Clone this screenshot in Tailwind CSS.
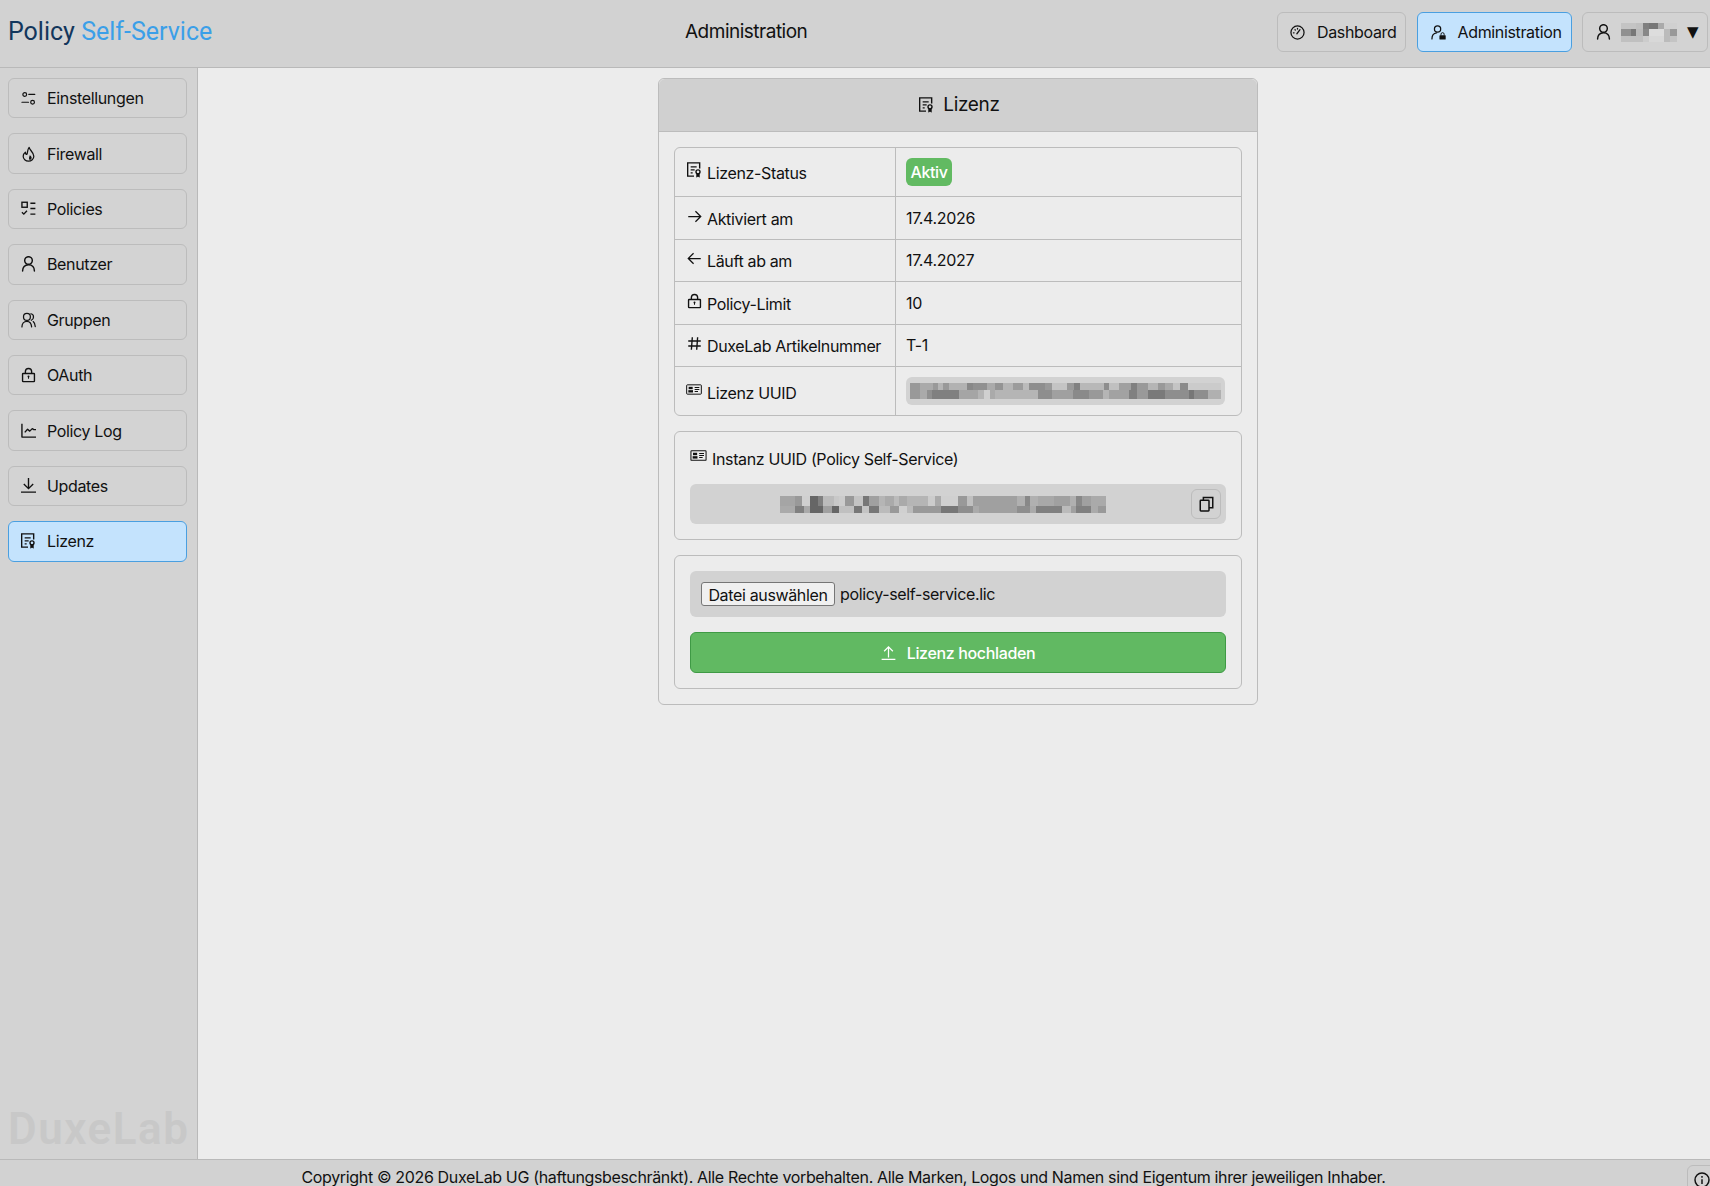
<!DOCTYPE html>
<html lang="de">
<head>
  <meta charset="UTF-8" />
  <meta name="viewport" content="width=device-width, initial-scale=1.0"/>
  <title>Policy Self-Service</title>
  <script src="https://cdn.jsdelivr.net/npm/@tailwindcss/browser@4"></script>
</head>
<body class="h-[1186px] overflow-hidden flex flex-col bg-[#ececec] text-[16px] tracking-[-0.35px] text-[#111] font-['Inter','Liberation_Sans',sans-serif]">

  <!-- icon sprites -->
  <svg class="hidden">
    <symbol id="i-license" viewBox="2 1 22.500 23.500" fill="none" stroke="currentColor" stroke-width="2.100">
      <path d="M21 10.500V2H3v20h9.500M7.500 8h9M7.500 12.500h6M7.500 17h3"/>
      <circle cx="18.500" cy="15.500" r="3"/>
      <path d="M16.500 18v5.500l2-1.500 2 1.500V18" fill="currentColor" stroke-width="1"/>
    </symbol>
    <symbol id="i-user" viewBox="1.500 1.500 21 23" fill="none" stroke="currentColor" stroke-width="2.100" stroke-linecap="round">
      <circle cx="12" cy="8" r="5.500"/>
      <path d="M3.500 23c0-5 3-9 8.500-9s8.500 4 8.500 9"/>
    </symbol>
    <symbol id="i-lock" viewBox="0 0 24 24" fill="none" stroke="currentColor" stroke-width="2.200">
      <rect x="2.500" y="9.500" width="19" height="13" rx="1"/>
      <path d="M7 9.500V6.500a5 5 0 0 1 10 0v3"/>
      <circle cx="12" cy="14.500" r="1.600" fill="currentColor" stroke="none"/>
      <path d="M12 15v3" stroke-width="1.600"/>
    </symbol>
    <symbol id="i-card" viewBox="0 0 24 16" fill="none" stroke="currentColor" stroke-width="1.500">
      <rect x="1" y="1" width="22" height="14" rx="1"/>
      <rect x="4" y="4" width="6" height="3.500" fill="currentColor" stroke="none"/>
      <rect x="3.500" y="9" width="7" height="3.500" fill="currentColor" stroke="none"/>
      <path d="M13 5h7M13 8h7M13 11h5"/>
    </symbol>
  </svg>

  <!-- Header -->
  <header class="h-[68px] shrink-0 flex items-center pb-[3px] bg-[#d2d2d2] border-b border-[#b9b9b9]">
    <div class="w-[685px] shrink-0 pl-[8px] mb-[1px] text-[25px] leading-none font-['Roboto',sans-serif] tracking-[0px] text-[#12365c]">Policy <span class="text-[#3b9fe8]">Self-Service</span></div>
    <div class="text-[19px] tracking-[-0.5px]">Administration</div>
    <nav class="ml-auto flex gap-[10.500px] pr-[2px]">
      <a class="h-[40px] w-[129px] flex items-center gap-[12px] pl-[12px] rounded-md border border-[#bcbcbc] bg-[#d3d3d3]">
        <svg class="w-[15px] h-[15px]" viewBox="0 0 24 24" fill="none" stroke="currentColor" stroke-width="2" stroke-linecap="round">
          <circle cx="12" cy="12" r="10.500"/>
          <path d="M11 14l5-6.500M5.500 12.500h1M8 7.500l.5.5M12 5.500v1"/>
        </svg>
        Dashboard
      </a>
      <a class="h-[40px] w-[155px] flex items-center gap-[12px] pl-[13px] rounded-md border border-[#4a9fe0] bg-[#c4e3fd]">
        <svg class="w-[15px] h-[16px]" viewBox="0 0 24 24" fill="none" stroke="currentColor" stroke-width="2" stroke-linecap="round">
          <circle cx="10.500" cy="7" r="5"/>
          <path d="M1.500 23c0-5.500 3-9 7.500-9.500"/>
          <rect x="13.500" y="17" width="10" height="7" rx="1" fill="currentColor" stroke="none"/>
          <path d="M16 17v-1.500a2.500 2.500 0 0 1 5 0V17" stroke-width="1.500"/>
        </svg>
        Administration
      </a>
      <a class="h-[40px] w-[126px] flex items-center pl-[13px] rounded-md border border-[#bcbcbc] bg-[#d3d3d3]">
        <svg class="w-[15px] h-[16px]"><use href="#i-user"/></svg>
        <svg class="ml-[10px] w-[56px] h-[19px]" data-blur="90 27 168 57" data-cells="45|135:#c4c4c4,156:#c0c0c0,174:#808080,201:#777,219:#aaa,258:#d0d0d0;66|120:#909090,135:#777,156:#bbb,174:#888,219:#ddd,237:#bbb,258:#999;84|156:#c0c0c0,174:#ccc,219:#d8d8d8,237:#bbb,258:#c4c4c4"></svg>
        <span class="ml-[10px] text-[15px] leading-none font-['DejaVu_Sans',sans-serif]">▼</span>
      </a>
    </nav>
  </header>

  <div class="flex-1 min-h-0 flex">
    <!-- Sidebar -->
    <aside class="w-[198px] shrink-0 flex flex-col gap-[15px] px-[8px] pt-[10px] pb-[8px] bg-[#d3d3d3] border-r border-[#b9b9b9]">
      <a class="h-[40.400px] w-[179px] flex items-center gap-[11px] pl-[12px] rounded-md border border-[#bcbcbc]">
        <svg class="w-[15px] h-[15px]" viewBox="0 0 24 24" fill="none" stroke="currentColor" stroke-width="1.900" stroke-linecap="round">
          <circle cx="6" cy="5.500" r="3"/><path d="M12.500 5.500H22M1.500 18H12"/><circle cx="18.500" cy="18" r="3"/>
        </svg>
        Einstellungen
      </a>
      <a class="h-[40.400px] w-[179px] flex items-center gap-[11px] pl-[12px] rounded-md border border-[#bcbcbc]">
        <svg class="w-[15px] h-[16px]" viewBox="0 0 24 24" fill="none" stroke="currentColor" stroke-width="2" stroke-linejoin="round">
          <path d="M13 1.500c.5 4 7.500 8 7.500 14a8.500 8 0 0 1-17 0c0-3 1.500-5 3.500-6.500 0 2 .7 3.500 2.500 3.500C11 9 10 5 13 1.500z"/>
          <path d="M14 14c2 1 3 2.500 3 4 0 1.500-1 3-2.500 3.500C13 21 12.500 19 13 17c.3-1 .8-2 1-3z" fill="currentColor" stroke="none"/>
        </svg>
        Firewall
      </a>
      <a class="h-[40.400px] w-[179px] flex items-center gap-[11px] pl-[12px] rounded-md border border-[#bcbcbc]">
        <svg class="w-[15px] h-[15px]" viewBox="0 0 24 24" fill="none" stroke="currentColor" stroke-width="2.200">
          <rect x="1.500" y="2" width="8.500" height="8"/><path d="M15 3.500h8M15 12h8M15 21h8M1.500 18l3 3 5-5.500"/>
        </svg>
        Policies
      </a>
      <a class="h-[40.400px] w-[179px] flex items-center gap-[11px] pl-[12px] rounded-md border border-[#bcbcbc]">
        <svg class="w-[15px] h-[16px]"><use href="#i-user"/></svg>
        Benutzer
      </a>
      <a class="h-[40.400px] w-[179px] flex items-center gap-[11px] pl-[12px] rounded-md border border-[#bcbcbc]">
        <svg class="w-[15px] h-[16px]" viewBox="0 0 24 24" fill="none" stroke="currentColor" stroke-width="2" stroke-linecap="round">
          <circle cx="9.500" cy="7" r="5.500"/><path d="M1.500 23c0-5 3-9 8-9s7 3.500 7.500 9M16 2c2.500.5 4 2.500 4 5s-1.500 4.500-3.500 5.500M19.500 14.500c2 1.500 3 4.500 3.300 8"/>
        </svg>
        Gruppen
      </a>
      <a class="h-[40.400px] w-[179px] flex items-center gap-[11px] pl-[12px] rounded-md border border-[#bcbcbc]">
        <svg class="w-[15px] h-[16px]"><use href="#i-lock"/></svg>
        OAuth
      </a>
      <a class="h-[40.400px] w-[179px] flex items-center gap-[11px] pl-[12px] rounded-md border border-[#bcbcbc]">
        <svg class="w-[15px] h-[15px]" viewBox="0 0 24 24" fill="none" stroke="currentColor" stroke-width="2.200">
          <path d="M1.500 1v21.500H24M6 15l4.500-5 3.500 3 4-4 2.500 1.500H24" stroke-linejoin="round"/>
        </svg>
        Policy Log
      </a>
      <a class="h-[40.400px] w-[179px] flex items-center gap-[11px] pl-[12px] rounded-md border border-[#bcbcbc]">
        <svg class="w-[15px] h-[15px]" viewBox="0 0 24 24" fill="none" stroke="currentColor" stroke-width="2.200">
          <path d="M12 0v17M4.500 9.500l7.500 7.500 7.500-7.500M0 22.500h24"/>
        </svg>
        Updates
      </a>
      <a class="h-[40.400px] w-[179px] flex items-center gap-[11px] pl-[12px] rounded-md border border-[#4a9fe0] bg-[#c4e3fd]">
        <svg class="w-[15px] h-[16px]"><use href="#i-license"/></svg>
        Lizenz
      </a>
      <div class="mt-auto text-[44px] leading-[44px] font-semibold font-['Roboto',sans-serif] tracking-[1.500px] text-[#c8c8c8] whitespace-nowrap">DuxeLab</div>
    </aside>

    <!-- Main -->
    <main class="flex-1 flex justify-center pl-[8px] pt-[10px]">
      <section class="w-[600px] h-[627px] rounded-md border border-[#bcbcbc]">
        <h1 class="h-[52.500px] flex items-center justify-center gap-[9px] pt-[1px] pl-[3px] bg-[#d0d0d0] border-b border-[#bcbcbc] rounded-t-md text-[19px]">
          <svg class="w-[15px] h-[16px]"><use href="#i-license"/></svg>
          Lizenz
        </h1>
        <div class="flex flex-col gap-[15.500px] px-[15px] pt-[15px]">

          <!-- Info table -->
          <div class="h-[269px] rounded-md border border-[#bcbcbc]">
            <div class="h-[49.500px] flex border-b border-[#bcbcbc]">
              <div class="w-[221px] flex items-center gap-[5px] pl-[12px] border-r border-[#bcbcbc]">
                <svg class="w-[15px] h-[16px] mb-[3px]"><use href="#i-license"/></svg>
                <span class="mt-[3px]">Lizenz-Status</span>
              </div>
              <div class="flex-1 flex items-center pl-[10px]">
                <span class="h-[28px] w-[46px] flex items-center justify-center rounded-md bg-[#62ba62] text-white font-medium">Aktiv</span>
              </div>
            </div>
            <div class="h-[42.500px] flex border-b border-[#bcbcbc]">
              <div class="w-[221px] flex items-center gap-[5px] pl-[12px] border-r border-[#bcbcbc]">
                <svg class="w-[15px] h-[15px] mb-[3px]" viewBox="0 0 24 24" fill="none" stroke="currentColor" stroke-width="2"><path d="M2 12h20M13.500 3.500l8.500 8.500-8.500 8.500"/></svg>
                <span class="mt-[2px]">Aktiviert am</span>
              </div>
              <div class="flex-1 flex items-center pl-[10px]">17.4.2026</div>
            </div>
            <div class="h-[42.500px] flex border-b border-[#bcbcbc]">
              <div class="w-[221px] flex items-center gap-[5px] pl-[12px] border-r border-[#bcbcbc]">
                <svg class="w-[15px] h-[15px] mb-[3px]" viewBox="0 0 24 24" fill="none" stroke="currentColor" stroke-width="2"><path d="M22 12H2M10.500 3.500L2 12l8.500 8.500"/></svg>
                <span class="mt-[2px]">Läuft ab am</span>
              </div>
              <div class="flex-1 flex items-center pl-[10px]">17.4.2027</div>
            </div>
            <div class="h-[42.500px] flex border-b border-[#bcbcbc]">
              <div class="w-[221px] flex items-center gap-[5px] pl-[12px] border-r border-[#bcbcbc]">
                <svg class="w-[15px] h-[16px] mb-[3px]"><use href="#i-lock"/></svg>
                <span class="mt-[2px]">Policy-Limit</span>
              </div>
              <div class="flex-1 flex items-center pl-[10px]">10</div>
            </div>
            <div class="h-[42.500px] flex border-b border-[#bcbcbc]">
              <div class="w-[221px] flex items-center gap-[5px] pl-[12px] border-r border-[#bcbcbc]">
                <svg class="w-[15px] h-[15px] mb-[3px]" viewBox="0 0 24 24" fill="none" stroke="currentColor" stroke-width="2.200"><path d="M8.500 2L7 22M17 2l-1.500 20M2 8h20M2 16h20"/></svg>
                <span class="mt-[2px]">DuxeLab Artikelnummer</span>
              </div>
              <div class="flex-1 flex items-center pl-[10px]">T-1</div>
            </div>
            <div class="h-[48px] flex">
              <div class="w-[221px] flex items-center gap-[5px] pl-[11px] border-r border-[#bcbcbc]">
                <svg class="w-[16px] h-[11px] mb-[3px]"><use href="#i-card"/></svg>
                <span class="mt-[3px]">Lizenz UUID</span>
              </div>
              <div class="flex-1 flex items-center pl-[10px]">
                <div class="w-[319px] h-[28px] flex items-center justify-center rounded-md bg-[#d2d2d2]">
                  <svg class="w-[311px] h-[16px]" data-blur="15 24 933 48" data-cells="45|45:#999,83:#aaa,98:#999,113:#b5b5b5,132:#999,186:#b2b2b2,205:#888,245:#909090,270:#aaa,294:#949494,323:#b5b5b5,354:#9c9c9c,372:#bbb,420:#8e8e8e,441:#999,486:#c4c4c4,507:#999,525:#808080,597:#b8b8b8,612:#8e8e8e,642:#c0c0c0,678:#a0a0a0,696:#808080,729:#999,759:#b5b5b5,780:#999,804:#aaa,825:#c4c4c4,849:#8a8a8a,948:#cbcbcb;72|45:#999,66:#aaa,81:#909090,162:#808080,219:#a5a5a5,237:#b5b5b5,255:#d0d0d0,270:#aaa,399:#b5b5b5,441:#8e8e8e,504:#a0a0a0,552:#8a8a8a,594:#999,612:#b5b5b5,672:#a2a2a2,696:#808080,729:#999,780:#7a7a7a,852:#8e8e8e,867:#777,909:#8e8e8e,948:#b0b0b0"></svg>
                </div>
              </div>
            </div>
          </div>

          <!-- Instance id -->
          <div class="h-[108.500px] rounded-md border border-[#bcbcbc] px-[15px] pt-[15px]">
            <div class="h-[22px] flex items-center gap-[5px]">
              <svg class="w-[17px] h-[11px] mb-[5px]"><use href="#i-card"/></svg>
              <span class="mt-[1px]">Instanz UUID (Policy Self-Service)</span>
            </div>
            <div class="relative mt-[15px] h-[40px] flex items-center justify-center rounded-md bg-[#d2d2d2]">
              <svg class="ml-[-30px] w-[326px] h-[17px]" data-blur="15 15 978 50" data-cells="45|60:#a5a5a5,81:#999,105:#d0d0d0,129:#666,144:#808080,177:#bbb,192:#c8c8c8,210:#ccc,237:#999,264:#c4c4c4,282:#777,312:#a0a0a0,330:#b5b5b5,357:#aaa,372:#bbb,396:#aaa,459:#b5b5b5,480:#ccc,498:#aaa,549:#d0d0d0,576:#999,594:#c0c0c0,726:#a0a0a0,750:#b0b0b0,765:#888,789:#b0b0b0,837:#a8a8a8,885:#a0a0a0,903:#b0b0b0,921:#888,948:#a0a0a0,993:#aaa;65|60:#aaa,87:#808080,105:#aaa,144:#666,171:#a0a0a0,192:#666,237:#c0c0c0,261:#777,282:#c4c4c4,312:#777,345:#bbb,372:#999,396:#d0d0d0,414:#bbb,498:#999,549:#777,594:#8e8e8e,612:#aaa,726:#a0a0a0,765:#8e8e8e,783:#aaa,861:#808080,888:#bbb,903:#a0a0a0,948:#808080,969:#aaa,993:#999"></svg>
              <button class="absolute right-[5px] top-[5px] w-[30px] h-[30px] flex items-center justify-center rounded-md border border-[#bcbcbc] bg-[#d2d2d2]">
                <svg class="w-[15px] h-[16px]" viewBox="0 0 24 24" fill="none" stroke="currentColor" stroke-width="2.400">
                  <rect x="2" y="6" width="14" height="17" rx="1"/><path d="M7 6V1.500h15V18h-6"/>
                </svg>
              </button>
            </div>
          </div>

          <!-- Upload -->
          <div class="h-[134px] rounded-md border border-[#bcbcbc] px-[15px] pt-[15px]">
            <div class="h-[46px] flex items-center gap-[5px] pl-[11px] rounded-md bg-[#d2d2d2]">
              <button class="h-[24px] w-[134px] rounded-[3px] border border-[#767676] bg-[#f0f0f0]">Datei auswählen</button>
              <span>policy-self-service.lic</span>
            </div>
            <button class="mt-[15px] w-full h-[41px] flex items-center justify-center gap-[11px] rounded-md border border-[#3f9a45] bg-[#61b962] text-white font-medium">
              <svg class="w-[15px] h-[15px]" viewBox="0 0 24 24" fill="none" stroke="currentColor" stroke-width="2">
                <path d="M12 20V3M5 10l7-7 7 7M1 23h22"/>
              </svg>
              Lizenz hochladen
            </button>
          </div>
        </div>
      </section>
    </main>
  </div>

  <!-- Footer -->
  <footer class="h-[27px] shrink-0 flex bg-[#d2d2d2] border-t border-[#b9b9b9]">
    <div class="flex-1 pt-[5px] text-center leading-6 whitespace-nowrap">Copyright © 2026 DuxeLab UG (haftungsbeschränkt). Alle Rechte vorbehalten. Alle Marken, Logos und Namen sind Eigentum ihrer jeweiligen Inhaber.</div>
    <div class="w-[30px] h-[30px] mt-[5px] mr-[-7px] shrink-0 flex items-center justify-center rounded-md border border-[#bcbcbc]">
      <svg class="w-[16px] h-[16px]" viewBox="0 0 24 24" fill="none" stroke="currentColor" stroke-width="2.200">
        <circle cx="12" cy="12" r="10.500"/><path d="M12 11v7M12 6v2.500"/>
      </svg>
    </div>
  </footer>

  <script>
    // redacted values: rows of pixel blocks, "rowEnd|cellEnd:colour,..."
    document.querySelectorAll('[data-blur]').forEach(svg => {
      const [x0, y0, w, h] = svg.dataset.blur.split(' ').map(Number);
      svg.setAttribute('viewBox', `${x0} ${y0} ${w} ${h}`);
      svg.setAttribute('preserveAspectRatio', 'none');
      svg.setAttribute('shape-rendering', 'crispEdges');
      let top = y0;
      svg.dataset.cells.split(';').forEach(row => {
        const [bottom, cells] = row.split('|');
        let left = x0;
        cells.split(',').forEach(cell => {
          const [end, fill] = cell.split(':');
          const r = document.createElementNS('http://www.w3.org/2000/svg', 'rect');
          r.setAttribute('x', left);
          r.setAttribute('y', top);
          r.setAttribute('width', end - left);
          r.setAttribute('height', bottom - top);
          r.setAttribute('fill', fill);
          svg.appendChild(r);
          left = +end;
        });
        top = +bottom;
      });
    });
  </script>
</body>
</html>
